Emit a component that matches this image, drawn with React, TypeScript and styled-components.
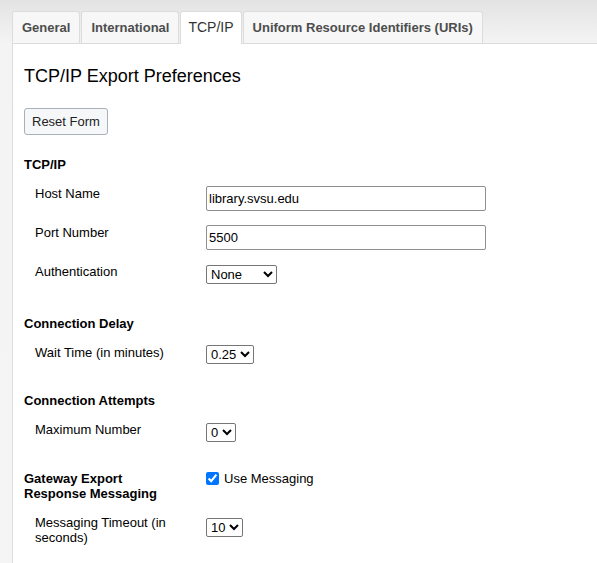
import { useState } from "react";
import styled, { createGlobalStyle } from "styled-components";

const GlobalStyle = createGlobalStyle`
  html, body {
    margin: 0;
    padding: 0;
  }
  body {
    font-family: "Liberation Sans", Arial, sans-serif;
    font-size: 13px;
    color: #000;
    background: #f5f5f5;
  }
`;

const Page = styled.div`
  min-height: 563px;
  padding: 11px 0 0 12px;
  box-sizing: border-box;
  background: linear-gradient(#e3e3e3 0px, #f4f4f4 44px, #f5f5f5 100%);
  display: flex;
  flex-direction: column;
`;

const TabBar = styled.div`
  display: flex;
  align-items: flex-end;
  gap: 1px;
  height: 32px;
`;

const Tab = styled.div<{ active?: boolean }>`
  height: ${({ active }) => (active ? "33px" : "32px")};
  margin-bottom: ${({ active }) => (active ? "-1px" : "0")};
  position: ${({ active }) => (active ? "relative" : "static")};
  box-sizing: border-box;
  padding: 0 ${({ active }) => (active ? "7px" : "9px")};
  border: 1px solid #dcdcdc;
  border-bottom: none;
  border-radius: 3px 3px 0 0;
  background: ${({ active }) => (active ? "#fff" : "#f7f7f7")};
  color: ${({ active }) => (active ? "#333" : "#4d4d4d")};
  font-size: ${({ active }) => (active ? "14px" : "13px")};
  font-weight: ${({ active }) => (active ? "normal" : "bold")};
  line-height: 31px;
  white-space: nowrap;
  cursor: pointer;
`;

const Panel = styled.div`
  flex: 1;
  background: #fff;
  border-top: 1px solid #dcdcdc;
  border-left: 1px solid #dcdcdc;
  padding: 21px 12px 30px 11px;
`;

const Title = styled.h2`
  margin: 0;
  font-size: 18px;
  font-weight: normal;
  line-height: 22px;
`;

const ResetButton = styled.button`
  margin-top: 21px;
  height: 27px;
  padding: 0 7px;
  border: 1px solid #a8b0b9;
  border-radius: 3px;
  background: #f5f7f9;
  font-family: inherit;
  font-size: 13px;
  color: #222;
  cursor: pointer;
`;

const Section = styled.div<{ space: number }>`
  display: grid;
  grid-template-columns: 150px 1fr;
  column-gap: 32px;
  row-gap: 14px;
  align-items: start;
  margin-top: ${({ space }) => space}px;
`;

const SectionTitle = styled.div`
  font-weight: bold;
  line-height: 15px;
`;

const Label = styled.div`
  padding-left: 11px;
  line-height: 15px;
`;

const TextInput = styled.input`
  width: 280px;
  height: 25px;
  box-sizing: border-box;
  margin: 0;
  padding: 1px 2px;
  border: 1px solid #8f8f8f;
  border-radius: 2px;
  font-family: inherit;
  font-size: 13px;
  color: #000;
`;

const Select = styled.select<{ w: number; top: number }>`
  width: ${({ w }) => w}px;
  height: 19px;
  margin: ${({ top }) => top}px 0 0;
  padding: 0;
  border: 1px solid #767676;
  border-radius: 2px;
  background: #fff;
  font-family: inherit;
  font-size: 13px;
  color: #000;
`;

const CheckLabel = styled.label`
  display: flex;
  align-items: center;
  gap: 5px;
  font-size: 13px;
  line-height: 15px;
  cursor: pointer;
`;

const CheckBox = styled.input`
  margin: 0;
  width: 13px;
  height: 13px;
  accent-color: #0075ff;
`;

const tabs = ["General", "International", "TCP/IP", "Uniform Resource Identifiers (URIs)"];

function App() {
  let [tab, tabf] = useState("TCP/IP");
  let [host, hostf] = useState("library.svsu.edu");
  let [port, portf] = useState("5500");
  let [msg, msgf] = useState(true);

  return (
    <Page>
      <GlobalStyle />
      <TabBar>
        {tabs.map((t) => (
          <Tab key={t} active={t === tab} onClick={() => tabf(t)}>
            {t}
          </Tab>
        ))}
      </TabBar>
      <Panel>
        <Title>TCP/IP Export Preferences</Title>
        <ResetButton>Reset Form</ResetButton>

        <Section space={22}>
          <SectionTitle>TCP/IP</SectionTitle>
          <div />
          <Label>Host Name</Label>
          <TextInput value={host} onChange={(e) => hostf(e.target.value)} />
          <Label>Port Number</Label>
          <TextInput value={port} onChange={(e) => portf(e.target.value)} />
          <Label>Authentication</Label>
          <Select w={71} top={1} defaultValue="None">
            <option>None</option>
            <option>Basic</option>
          </Select>
        </Section>

        <Section space={32}>
          <SectionTitle>Connection Delay</SectionTitle>
          <div />
          <Label>Wait Time (in minutes)</Label>
          <Select w={48} top={0} defaultValue="0.25">
            <option>0.25</option>
            <option>0.5</option>
            <option>1</option>
          </Select>
        </Section>

        <Section space={29}>
          <SectionTitle>Connection Attempts</SectionTitle>
          <div />
          <Label>Maximum Number</Label>
          <Select w={30} top={1} defaultValue="0">
            <option>0</option>
            <option>1</option>
            <option>2</option>
          </Select>
        </Section>

        <Section space={29}>
          <SectionTitle>Gateway Export Response Messaging</SectionTitle>
          <CheckLabel>
            <CheckBox type="checkbox" checked={msg} onChange={() => msgf(!msg)} />
            Use Messaging
          </CheckLabel>
          <Label>Messaging Timeout (in seconds)</Label>
          <Select w={37} top={3} defaultValue="10">
            <option>10</option>
            <option>20</option>
            <option>30</option>
          </Select>
        </Section>
      </Panel>
    </Page>
  );
}

export default App;
